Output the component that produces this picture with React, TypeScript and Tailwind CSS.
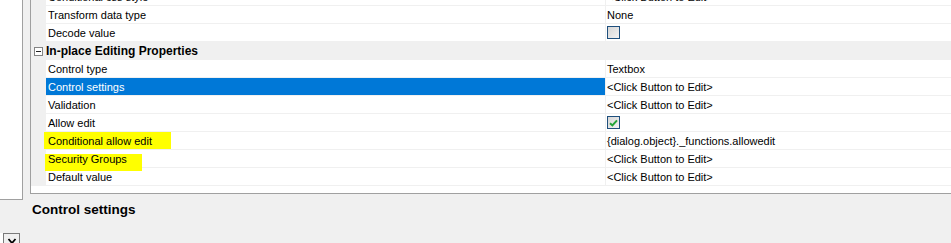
import React from "react";

type Row = {
  name: string;
  value?: string;
  check?: "on" | "off";
  mark?: string;
};

const topRows: Row[] = [
  { name: "Conditional css style", value: "<Click Button to Edit>" },
  { name: "Transform data type", value: "None" },
  { name: "Decode value", check: "off" },
];

const editRows: Row[] = [
  { name: "Control type", value: "Textbox" },
  { name: "Control settings", value: "<Click Button to Edit>" },
  { name: "Validation", value: "<Click Button to Edit>" },
  { name: "Allow edit", check: "on" },
  {
    name: "Conditional allow edit",
    value: "{dialog.object}._functions.allowedit",
    mark: "left-[-2px] top-[0px] h-[17px] w-[127px]",
  },
  {
    name: "Security Groups",
    value: "<Click Button to Edit>",
    mark: "left-[-1px] top-[4px] h-[17px] w-[97px]",
  },
  { name: "Default value", value: "<Click Button to Edit>" },
];

function CheckBox({ on }: { on: boolean }) {
  return (
    <div className="mt-[1px] flex h-[13px] w-[13px] items-center justify-center border border-[#1e4f7d] bg-gradient-to-br from-[#d6d6d6] to-[#f2f2f2]">
      {on ? (
        <svg width="9" height="8" viewBox="0 0 9 8">
          <path
            d="M1 4.2 L3.4 6.4 L8 1.4"
            fill="none"
            stroke="#22a336"
            strokeWidth="2"
          />
        </svg>
      ) : null}
    </div>
  );
}

function PropRow({ row, selected }: { row: Row; selected?: boolean }) {
  return (
    <div className="flex h-[18px]">
      <div className="w-[15px] shrink-0 bg-[#f0f0f0]" />
      <div
        className={
          selected
            ? "relative w-[559px] shrink-0 border-b border-[#f0f0f0] bg-[#0078d7] pl-[2px] text-white"
            : "relative w-[559px] shrink-0 border-b border-[#f0f0f0] pl-[2px]"
        }
      >
        {row.mark ? (
          <span className={"absolute bg-[#ffff00] " + row.mark} />
        ) : null}
        <span className="relative block pt-[1px] leading-[16px]">{row.name}</span>
      </div>
      <div className="flex-1 border-b border-l border-[#f0f0f0] pl-[1px] pt-[1px] leading-[16px]">
        {row.check ? <CheckBox on={row.check === "on"} /> : row.value}
      </div>
    </div>
  );
}

export default function App() {
  return (
    <div className="h-[243px] w-[951px] overflow-hidden bg-[#f0f0f0] text-[11px] text-black [font-family:'Liberation_Sans',Arial,sans-serif]">
      <div className="flex">
        <div className="flex w-[23px] shrink-0 flex-col">
          <div className="h-[200px] border-b border-r border-[#a0a0a0] bg-white" />
          <div className="mt-[33px] flex h-[14px]">
            <div className="w-[3px] bg-white" />
            <div className="flex w-[17px] justify-center border border-[#7a7a7a] bg-[#f0f0f0]">
              <svg width="10" height="8" viewBox="0 0 10 8" className="mt-[4px]">
                <path d="M1.5 1 L5 5 L8.5 1" fill="none" stroke="#000" strokeWidth="1.8" />
              </svg>
            </div>
          </div>
        </div>

        <div className="ml-[7px] flex flex-1 flex-col">
          <div className="h-[194px] overflow-hidden border-b border-l border-[#a0a0a0] bg-white">
            <div className="-mt-[12px]">
              {topRows.map((r) => (
                <PropRow key={r.name} row={r} />
              ))}
              <div className="flex h-[18px] items-center bg-[#f0f0f0]">
                <div className="flex w-[15px] shrink-0 justify-center">
                  <div className="flex h-[9px] w-[9px] items-center justify-center border border-[#848484] bg-white">
                    <div className="h-px w-[5px] bg-[#222]" />
                  </div>
                </div>
                <span className="text-[12px] font-bold">In-place Editing Properties</span>
              </div>
              {editRows.map((r) => (
                <PropRow key={r.name} row={r} selected={r.name === "Control settings"} />
              ))}
            </div>
          </div>
          <div className="pl-[2px] pt-[6px] text-[13.5px] font-bold">Control settings</div>
        </div>
      </div>
    </div>
  );
}
